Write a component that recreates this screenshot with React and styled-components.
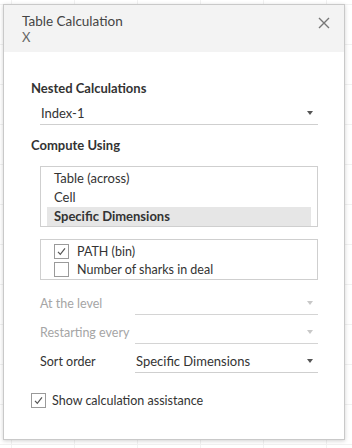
import React from 'react';
import styled, { createGlobalStyle } from 'styled-components';

const GlobalStyle = createGlobalStyle`
  html, body {
    margin: 0;
    padding: 0;
  }
  body {
    width: 352px;
    height: 448px;
    overflow: hidden;
    font-family: Lato, "Noto Sans", sans-serif;
    color: #333;
    background-color: #fff;
    background-image:
      linear-gradient(to right, #f1f1f1 1px, transparent 1px),
      linear-gradient(to bottom, #f1f1f1 1px, transparent 1px);
    background-size: 63px 40px;
    background-position: 11px 4px;
  }
`;

const Page = styled.div`
  padding: 4px 7px 9px 3px;
`;

const Dialog = styled.div`
  height: 434px;
  background: #fff;
  border: 1px solid #c9c9c9;
  box-shadow: 0 1px 4px rgba(0, 0, 0, 0.18);
  display: flex;
  flex-direction: column;
`;

const Header = styled.div`
  height: 47px;
  background: #f3f3f3;
  display: flex;
  justify-content: space-between;
  padding: 8px 12px 0 18px;
  box-sizing: border-box;
`;

const Title = styled.div`
  font-size: 13.5px;
  line-height: 17px;
  color: #444;
`;

const SubTitle = styled.div`
  font-size: 13px;
  line-height: 14px;
  color: #666;
`;

const CloseButton = styled.button`
  border: none;
  background: none;
  padding: 0;
  width: 16px;
  height: 16px;
  margin-top: 3px;
  cursor: pointer;
`;

const Body = styled.div`
  padding: 28px 26px 0 27px;
  display: flex;
  flex-direction: column;
`;

const SectionTitle = styled.div`
  font-size: 13px;
  font-weight: bold;
  color: #333;
  line-height: 16px;
  margin-top: ${p => p.top || 0}px;
  margin-bottom: ${p => p.gap || 0}px;
`;

const Indent = styled.div`
  padding-left: 9px;
`;

const Select = styled.div`
  display: flex;
  align-items: center;
  justify-content: space-between;
  height: 23px;
  border-bottom: 1px solid ${p => (p.disabled ? '#d4d4d4' : '#cfcfcf')};
  font-size: 13px;
  color: #333;
  padding: 0 2px 0 1px;
  flex: 1;
`;

const Arrow = styled.span`
  width: 0;
  height: 0;
  border-left: 3.5px solid transparent;
  border-right: 3.5px solid transparent;
  border-top: 4px solid ${p => (p.disabled ? '#c8c8c8' : '#555')};
  margin-right: 3px;
`;

const ListBox = styled.div`
  border: 1px solid #cfcfcf;
  padding: 2px 6px 0 6px;
  margin-top: 13px;
`;

const ListItem = styled.div`
  font-size: 13px;
  height: 19px;
  line-height: 19px;
  padding-left: 7px;
  color: #333;
  font-weight: ${p => (p.selected ? 'bold' : 'normal')};
  background: ${p => (p.selected ? '#e6e6e6' : 'transparent')};
`;

const CheckList = styled.div`
  border: 1px solid #cfcfcf;
  margin-top: 12px;
  padding: 2px 0 1px 13px;
`;

const CheckRow = styled.label`
  display: flex;
  align-items: center;
  gap: ${p => p.gap || 8}px;
  height: 18px;
  font-size: ${p => p.size || 12.5}px;
  color: #333;
`;

const Box = styled.span`
  width: 13px;
  height: 13px;
  border: 1px solid #9a9a9a;
  background: #fff;
  display: flex;
  align-items: center;
  justify-content: center;
  flex-shrink: 0;
`;

const Fields = styled.div`
  margin-top: 11px;
  display: flex;
  flex-direction: column;
  gap: 5px;
`;

const FieldRow = styled.div`
  display: flex;
  align-items: flex-end;
  padding-left: 9px;
`;

const FieldLabel = styled.div`
  width: 95px;
  font-size: 12.5px;
  line-height: 23px;
  color: ${p => (p.disabled ? '#a5a5a5' : '#333')};
`;

const Footer = styled.div`
  margin-top: 18px;
`;

const Check = ({ checked }) => (
  <Box>
    {checked && (
      <svg width="11" height="11" viewBox="0 0 11 11">
        <path d="M2 5.8 L4.3 8.3 L9 2.3" fill="none" stroke="#555" strokeWidth="1.2" />
      </svg>
    )}
  </Box>
);

const App = () => {
  return (
    <Page>
      <GlobalStyle />
      <Dialog>
        <Header>
          <div>
            <Title>Table Calculation</Title>
            <SubTitle>X</SubTitle>
          </div>
          <CloseButton aria-label="Close">
            <svg width="14" height="14" viewBox="0 0 14 14">
              <path d="M2 2 L12 12 M12 2 L2 12" stroke="#777" strokeWidth="1.4" />
            </svg>
          </CloseButton>
        </Header>
        <Body>
          <SectionTitle gap={5}>Nested Calculations</SectionTitle>
          <Indent>
            <Select>
              Index-1
              <Arrow />
            </Select>
          </Indent>
          <SectionTitle top={12}>Compute Using</SectionTitle>
          <Indent>
            <ListBox>
              <ListItem>Table (across)</ListItem>
              <ListItem>Cell</ListItem>
              <ListItem selected>Specific Dimensions</ListItem>
            </ListBox>
            <CheckList>
              <CheckRow>
                <Check checked />
                PATH (bin)
              </CheckRow>
              <CheckRow>
                <Check />
                Number of sharks in deal
              </CheckRow>
            </CheckList>
          </Indent>
          <Fields>
            <FieldRow>
              <FieldLabel disabled>At the level</FieldLabel>
              <Select disabled>
                <span />
                <Arrow disabled />
              </Select>
            </FieldRow>
            <FieldRow>
              <FieldLabel disabled>Restarting every</FieldLabel>
              <Select disabled>
                <span />
                <Arrow disabled />
              </Select>
            </FieldRow>
            <FieldRow>
              <FieldLabel>Sort order</FieldLabel>
              <Select>
                Specific Dimensions
                <Arrow />
              </Select>
            </FieldRow>
          </Fields>
          <Footer>
            <CheckRow gap={6}>
              <Check checked />
              Show calculation assistance
            </CheckRow>
          </Footer>
        </Body>
      </Dialog>
    </Page>
  );
};

export default App;
